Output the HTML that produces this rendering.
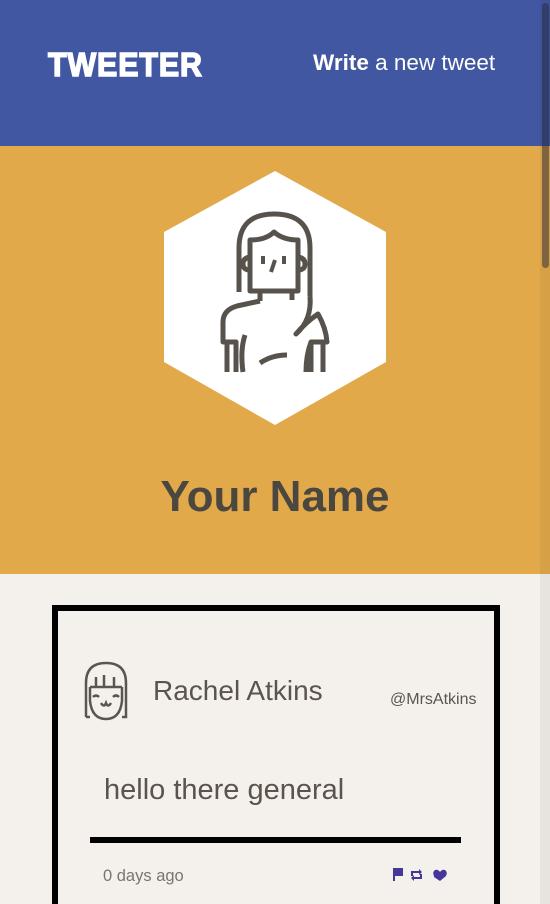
<!DOCTYPE html>
<html style="width:550px;height:904px;overflow:hidden"><head><style>
*{margin:0;padding:0;box-sizing:border-box}
body{width:550px;height:904px;overflow:hidden;background:#f4f1ec;font-family:"Liberation Sans",sans-serif;position:relative}
.hdr{position:absolute;left:0;top:0;width:550px;height:146px;background:#4157a1}
.logo{position:absolute;left:48px;top:46px;color:#fff;font-weight:900;font-size:33px;letter-spacing:1px;transform:scaleX(0.92);transform-origin:left;-webkit-text-stroke:1.5px #fff}
.write{position:absolute;left:313px;top:50px;color:#fff;font-size:22.5px;font-weight:300}
.write b{font-weight:700}
.gold{position:absolute;left:0;top:146px;width:550px;height:428px;background:#e2a94a}
.name{position:absolute;left:0;width:550px;top:472px;text-align:center;font-size:44px;font-weight:700;color:#4a4640}
.sb{position:absolute;right:0;top:0;width:10px;height:904px;background:rgba(0,0,0,0.05)}
.thumb{position:absolute;right:1px;top:3px;width:7px;height:265px;border-radius:4px;background:rgba(40,40,60,0.5)}
.card{position:absolute;left:52px;top:605px;width:448px;height:330px;border:6px solid #000}
.t{position:absolute;color:#5c544c;font-weight:300;white-space:nowrap}
</style></head><body>
<div class="hdr"><div class="logo">TWEETER</div><div class="write"><b>Write</b> a new tweet</div></div>
<div class="gold">
<svg width="550" height="428" style="position:absolute;left:0;top:0">
<polygon points="275,25 386,86 386,216 275,279 164,216 164,86" fill="#fff"/>
<g transform="translate(0,-146)" fill="none" stroke="#57534c" stroke-width="5" stroke-linejoin="round">
<path d="M239,292 V248 Q239,214 274,214 Q310,214 310,248 V296"/>
<path d="M250,291 V240 Q266,240 274,232 Q283,240 298,240 V291 Z"/>
<path d="M250,257 Q243,258 243,264 Q243,270 250,270 M298,257 Q305,258 305,264 Q305,270 298,270"/>
<path d="M260,291 V301 M292,291 V300"/>
<path d="M260,301 L237,306 Q223,310 223,322 V342 H236 V372 M227,342 V372"/>
<path d="M245,335 Q240,350 243,372"/>
<path d="M310,296 Q312,320 296,334 Q306,322 318,314 Q326,328 327,342 H311 V372 M323,342 V372"/>
<path d="M311,342 Q306,355 306,372"/>
<path d="M260,363 Q272,355 287,355"/>
</g>
<g transform="translate(0,-146)" stroke="#57534c" stroke-width="4"><path d="M263,256 V264 M284,256 V264 M275,260 L271,272"/></g>
</svg>
</div>
<div class="name">Your Name</div>
<div class="card">
<svg width="60" height="70" style="position:absolute;left:20px;top:44px"><g fill="none" stroke="#5c554f" stroke-width="2.5">
<path d="M8,62 V28 Q8,8 28,8 Q48,8 48,28 V62 H44 M8,62 H12"/>
<path d="M12,32 H44 M18,32 V22 M26,32 V20 M36,32 V22"/>
<path d="M12,32 V46 Q14,64 28,64 Q42,64 44,46 V32"/>
<path d="M15,42 Q18,39 21,42 M35,42 Q38,39 41,42 M23,48 Q26,53 28,48 Q30,53 33,48"/>
</g></svg>
<div class="t" style="left:95px;top:64px;font-size:28px">Rachel Atkins</div>
<div class="t" style="left:332px;top:80px;font-size:16px">@MrsAtkins</div>
<div class="t" style="left:46px;top:163px;font-size:29px">hello there general</div>
<div style="position:absolute;left:32px;top:226px;width:371px;height:6px;background:#000"></div>
<div class="t" style="left:45px;top:256px;font-size:16.5px;color:#7a746c">0 days ago</div>
<svg width="60" height="16" style="position:absolute;left:333px;top:256px" fill="#45379a">
<path d="M2,1 V14 H4 V9 H12 V1 H4 Z"/>
<path d="M20,9 V4 H28 V2 L31,5 L28,8 V6 H22 V9 Z M31,7 V12 H23 V14 L20,11 L23,8 V10 H29 V7 Z"/>
<path d="M43,10 L49,14 L55,9 Q57,5 54,3 Q51,2 49,5 Q47,2 44,3 Q41,5 43,9 Z"/>
</svg>
</div>
<div class="sb"><div class="thumb"></div></div>
</body></html>
